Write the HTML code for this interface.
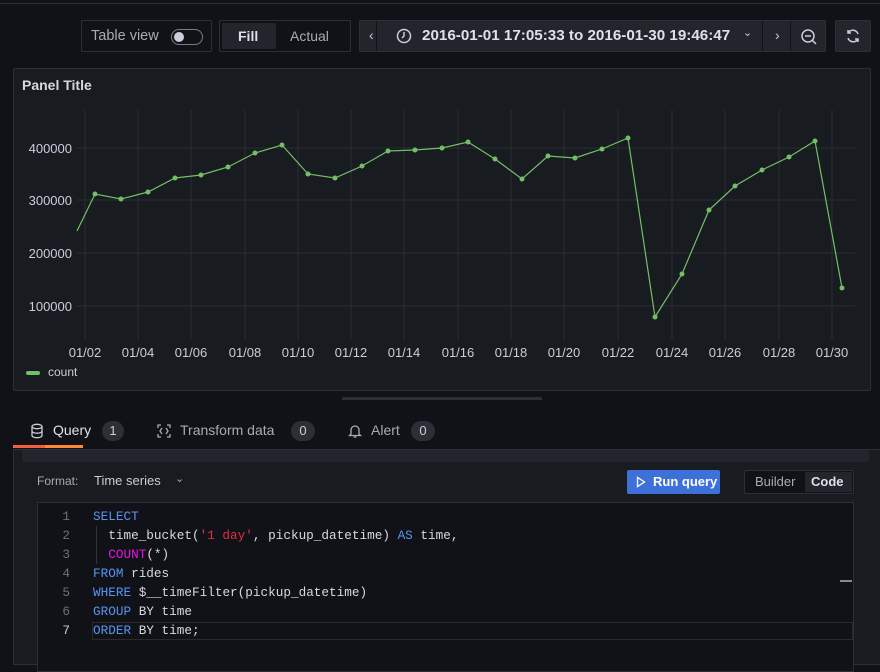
<!DOCTYPE html>
<html><head><style>
*{box-sizing:border-box;margin:0;padding:0}
body{width:880px;height:665px;background:#111217;font-family:"Liberation Sans",sans-serif;color:#ccccdc;position:relative;overflow:hidden;font-size:14px}
.abs{position:absolute}
.btn{position:absolute;border:1px solid #2c2f35;border-radius:2px;background:#181b1f}
.code{font-family:"Liberation Mono",monospace;font-size:12.7px}
.kw{color:#5794f2}
</style></head><body>
<div class="abs" style="left:0;top:0;width:880px;height:4px;border-bottom:1px solid #2a2d33"></div>
<div class="btn" style="left:81px;top:20px;width:131px;height:32px;background:#111217">
 <span class="abs" style="left:9px;top:7px;color:#a9abb3;font-size:14.5px">Table view</span>
 <div class="abs" style="left:89px;top:8px;width:32px;height:16px;border:1px solid #7a7d85;border-radius:8px"><div class="abs" style="left:2px;top:2px;width:10px;height:10px;border-radius:50%;background:#ccccdc"></div></div>
</div>
<div class="btn" style="left:219px;top:20px;width:132px;height:32px;background:#111217">
 <div class="abs" style="left:2px;top:2px;width:54px;height:26px;background:#22252b;border-radius:2px"></div>
 <span class="abs" style="left:18px;top:7px;color:#e0e0e8;font-weight:bold">Fill</span>
 <span class="abs" style="left:70px;top:7px;color:#a9abb3">Actual</span>
</div>
<div class="btn" style="left:359px;top:20px;width:467px;height:32px;background:#22252b">
 <span class="abs" style="left:9px;top:6px;color:#ccccdc">‹</span>
 <div class="abs" style="left:16px;top:0;width:1px;height:30px;background:#111217"></div>
 <svg class="abs" style="left:36px;top:7px" width="16" height="16" viewBox="0 0 16 16"><circle cx="8" cy="8" r="6.5" fill="none" stroke="#ccccdc" stroke-width="1.5"/><path d="M8 4v4l-2 2" stroke="#ccccdc" stroke-width="1.5" fill="none"/></svg>
 <span class="abs" style="left:62px;top:6px;color:#e0e0e8;font-weight:bold;font-size:15.2px">2016-01-01 17:05:33 to 2016-01-30 19:46:47</span>
 <span class="abs" style="left:383px;top:5px;font-size:11px">⌄</span>
 <div class="abs" style="left:402px;top:0;width:1px;height:30px;background:#111217"></div>
 <span class="abs" style="left:415px;top:6px">›</span>
 <div class="abs" style="left:430px;top:0;width:1px;height:30px;background:#111217"></div>
 <svg class="abs" style="left:440px;top:7px" width="18" height="18" viewBox="0 0 18 18"><circle cx="8" cy="8" r="6" fill="none" stroke="#ccccdc" stroke-width="1.5"/><path d="M5 8h6M12.5 12.5l3.5 3.5" stroke="#ccccdc" stroke-width="1.5"/></svg>
</div>
<div class="btn" style="left:835px;top:20px;width:36px;height:32px;background:#22252b">
 <svg class="abs" style="left:9px;top:7px" width="16" height="16" viewBox="0 0 16 16"><path d="M13 6A5.5 5.5 0 0 0 3 5M3 10a5.5 5.5 0 0 0 10 1M3 2v3h3M13 14v-3h-3" fill="none" stroke="#ccccdc" stroke-width="1.5"/></svg>
</div>

<div class="abs" style="left:13px;top:68px;width:858px;height:323px;background:#181b1f;border:1px solid #2c2f35;border-radius:2px"></div>
<span class="abs" style="left:22px;top:77px;font-weight:bold;color:#d8d9e0;font-size:14px">Panel Title</span>
<svg class="abs" style="left:0;top:0" width="880" height="400">
<g stroke="#2a2d32" stroke-width="1">
<path d="M77 148H855M77 200H855M77 253H855M77 306H855"/>
<path d="M85 110V340M138 110V340M191 110V340M245 110V340M298 110V340M351 110V340M404 110V340M458 110V340M511 110V340M564 110V340M618 110V340M672 110V340M725 110V340M779 110V340M832 110V340"/>
</g>
<g font-family="Liberation Sans" font-size="13" fill="#ccccdc" text-anchor="end">
<text x="72" y="153">400000</text><text x="72" y="205">300000</text><text x="72" y="258">200000</text><text x="72" y="311">100000</text>
</g>
<g font-family="Liberation Sans" font-size="13" fill="#ccccdc" text-anchor="middle">
<text x="85" y="357">01/02</text><text x="138" y="357">01/04</text><text x="191" y="357">01/06</text><text x="245" y="357">01/08</text><text x="298" y="357">01/10</text><text x="351" y="357">01/12</text><text x="404" y="357">01/14</text><text x="458" y="357">01/16</text><text x="511" y="357">01/18</text><text x="564" y="357">01/20</text><text x="618" y="357">01/22</text><text x="672" y="357">01/24</text><text x="725" y="357">01/26</text><text x="779" y="357">01/28</text><text x="832" y="357">01/30</text>
</g>
<polyline fill="none" stroke="#73bf69" stroke-width="1.2" points="77,231 95,194 121,199 148,192 175,178 201,175 228,167 255,153 282,145 308,174 335,178 362,166 388,151 415,150 442,148 468,142 495,159 522,179 548,156 575,158 602,149 628,138 655,317 682,274 709,210 735,186 762,170 789,157 815,141 842,288"/>
<g fill="#73bf69">
<circle cx="95" cy="194" r="2.5"/><circle cx="121" cy="199" r="2.5"/><circle cx="148" cy="192" r="2.5"/><circle cx="175" cy="178" r="2.5"/><circle cx="201" cy="175" r="2.5"/><circle cx="228" cy="167" r="2.5"/><circle cx="255" cy="153" r="2.5"/><circle cx="282" cy="145" r="2.5"/><circle cx="308" cy="174" r="2.5"/><circle cx="335" cy="178" r="2.5"/><circle cx="362" cy="166" r="2.5"/><circle cx="388" cy="151" r="2.5"/><circle cx="415" cy="150" r="2.5"/><circle cx="442" cy="148" r="2.5"/><circle cx="468" cy="142" r="2.5"/><circle cx="495" cy="159" r="2.5"/><circle cx="522" cy="179" r="2.5"/><circle cx="548" cy="156" r="2.5"/><circle cx="575" cy="158" r="2.5"/><circle cx="602" cy="149" r="2.5"/><circle cx="628" cy="138" r="2.5"/><circle cx="655" cy="317" r="2.5"/><circle cx="682" cy="274" r="2.5"/><circle cx="709" cy="210" r="2.5"/><circle cx="735" cy="186" r="2.5"/><circle cx="762" cy="170" r="2.5"/><circle cx="789" cy="157" r="2.5"/><circle cx="815" cy="141" r="2.5"/><circle cx="842" cy="288" r="2.5"/>
</g>
<rect x="26" y="371" width="14" height="4" rx="2" fill="#73bf69"/>
<text x="48" y="376" font-family="Liberation Sans" font-size="12" fill="#ccccdc">count</text>
<rect x="342" y="397" width="200" height="4" rx="2" fill="#2c2f35"/>
</svg>

<svg class="abs" style="left:30px;top:423px" width="14" height="16" viewBox="0 0 14 16"><ellipse cx="7" cy="3.5" rx="5" ry="2.2" fill="none" stroke="#ccccdc" stroke-width="1.3"/><path d="M2 3.5v9c0 1.2 2.2 2.2 5 2.2s5-1 5-2.2v-9M2 8c0 1.2 2.2 2.2 5 2.2S12 9.2 12 8" fill="none" stroke="#ccccdc" stroke-width="1.3"/></svg>
<span class="abs" style="left:53px;top:422px;color:#e0e0e8">Query</span>
<div class="abs" style="left:102px;top:421px;width:22px;height:20px;border-radius:10px;background:#2c2f35;color:#ccccdc;font-size:13px;text-align:center;line-height:20px">1</div>
<div class="abs" style="left:13px;top:445px;width:70px;height:3px;background:#f55f3e"></div>
<div class="abs" style="left:45px;top:445px;width:38px;height:3px;background:#ff8833"></div>
<svg class="abs" style="left:156px;top:423px" width="16" height="16" viewBox="0 0 16 16"><path d="M2 5V2h3M11 2h3v3M14 11v3h-3M5 14H2v-3M6 5l-2 3 2 3M10 5l2 3-2 3" fill="none" stroke="#a9abb3" stroke-width="1.3"/></svg>
<span class="abs" style="left:180px;top:422px;color:#a9abb3">Transform data</span>
<div class="abs" style="left:291px;top:421px;width:24px;height:20px;border-radius:10px;background:#2c2f35;font-size:13px;text-align:center;line-height:20px">0</div>
<svg class="abs" style="left:348px;top:423px" width="14" height="16" viewBox="0 0 14 16"><path d="M3 11V7a4 4 0 0 1 8 0v4l1.5 1.5h-11zM5.5 14h3" fill="none" stroke="#a9abb3" stroke-width="1.3"/></svg>
<span class="abs" style="left:371px;top:422px;color:#a9abb3">Alert</span>
<div class="abs" style="left:411px;top:421px;width:24px;height:20px;border-radius:10px;background:#2c2f35;font-size:13px;text-align:center;line-height:20px">0</div>

<div class="abs" style="left:13px;top:449px;width:867px;height:216px;background:#181b1f;border:1px solid #2c2f35;border-right:none"></div>
<div class="abs" style="left:22px;top:450px;width:847px;height:12px;background:#22252b;border-radius:0 0 3px 3px"></div>
<span class="abs" style="left:37px;top:474px;font-size:12px;color:#a9abb3">Format:</span>
<span class="abs" style="left:94px;top:473px;font-size:13px;color:#ccccdc">Time series</span>
<span class="abs" style="left:175px;top:472px;font-size:11px;color:#a9abb3">⌄</span>
<div class="abs" style="left:627px;top:470px;width:93px;height:24px;background:#3d71d9;border-radius:2px;color:#fff;font-weight:bold;font-size:13px;line-height:24px;padding-left:26px">Run query</div>
<svg class="abs" style="left:636px;top:476px" width="10" height="12" viewBox="0 0 10 12"><path d="M1.5 1.5v9l7-4.5z" fill="none" stroke="#fff" stroke-width="1.3"/></svg>
<div class="abs" style="left:744px;top:470px;width:110px;height:24px;border:1px solid #2c2f35;border-radius:2px;background:#111217"></div>
<span class="abs" style="left:755px;top:474px;font-size:13px;color:#a9abb3">Builder</span>
<div class="abs" style="left:805px;top:472px;width:47px;height:20px;background:#22252b"></div>
<span class="abs" style="left:811px;top:474px;font-size:13px;color:#e0e0e8;font-weight:bold">Code</span>

<div class="abs" style="left:37px;top:502px;width:817px;height:170px;background:#111217;border:1px solid #2c2f35"></div>
<div class="abs" style="left:92px;top:622px;width:761px;height:18px;border:1px solid #282a2e"></div>
<div class="abs" style="left:840px;top:580px;width:12px;height:2px;background:#888"></div>
<div class="abs" style="left:96px;top:526px;width:1px;height:38px;background:#333"></div>
<div class="code abs" style="left:40px;top:507px;line-height:19px;color:#6e7079;width:30px;text-align:right">1<br>2<br>3<br>4<br>5<br>6<br><span style="color:#ccccdc">7</span></div>
<div class="code abs" style="left:93px;top:507px;line-height:19px;color:#d8d9e0;white-space:pre"><span class="kw">SELECT</span>
  time_bucket(<span style="color:#e02f44">'1 day'</span>, pickup_datetime) <span class="kw">AS</span> time,
  <span style="color:#e812e8">COUNT</span>(*)
<span class="kw">FROM</span> rides
<span class="kw">WHERE</span> $__timeFilter(pickup_datetime)
<span class="kw">GROUP</span> BY time
<span class="kw">ORDER</span> BY time;</div>
</body></html>
